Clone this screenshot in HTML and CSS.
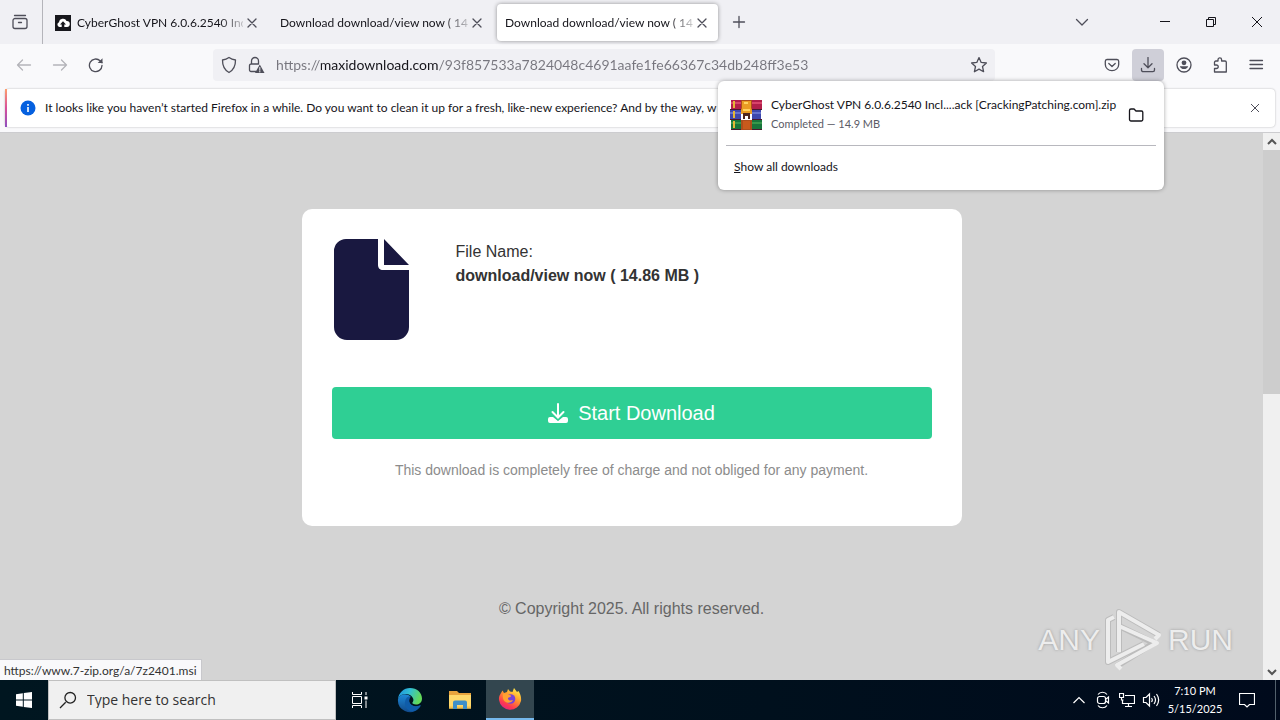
FILE: index.html
```html
<!DOCTYPE html>
<html lang="en">
<head>
<meta charset="utf-8">
<title>Download download/view now ( 14.86 MB )</title>
<link rel="stylesheet" href="styles.css">
</head>
<body>
<header class="tabstrip">
  <button class="recent" aria-label="Recent browsing"><svg width="20" height="20" viewBox="0 0 20 20" class="line"><path d="M4.500 3.500h11M5 6.500h10a2 2 0 0 1 2 2v6a2 2 0 0 1-2 2H5a2 2 0 0 1-2-2v-6a2 2 0 0 1 2-2zM8.500 10.500h3"/></svg></button>
  <div class="tabs">
    <div class="tab">
      <svg class="favicon" width="16" height="16" viewBox="0 0 16 16"><path fill="#17171c" d="M0 0h16v16H0z"/><path fill="#fff" d="M4.500 12A2.500 2.500 0 0 1 4 7.200 4 4 0 0 1 11.600 6 3 3 0 0 1 12 12H9.300V9.500H11L8 6.200 5 9.500h1.700V12z"/></svg>
      <span class="tab-title">CyberGhost VPN 6.0.6.2540 Incl</span>
      <button class="tab-close" aria-label="Close tab"><svg width="10" height="10" viewBox="0 0 10 10" class="line"><path d="M1 1l8 8M9 1L1 9"/></svg></button>
    </div>
    <div class="tab">
      <span class="tab-title">Download download/view now ( 14</span>
      <button class="tab-close" aria-label="Close tab"><svg width="10" height="10" viewBox="0 0 10 10" class="line"><path d="M1 1l8 8M9 1L1 9"/></svg></button>
    </div>
    <div class="tab active">
      <span class="tab-title">Download download/view now ( 14</span>
      <button class="tab-close" aria-label="Close tab"><svg width="10" height="10" viewBox="0 0 10 10" class="line"><path d="M1 1l8 8M9 1L1 9"/></svg></button>
    </div>
  </div>
  <button class="tool" aria-label="New tab"><svg width="16" height="16" viewBox="0 0 16 16" class="line"><path d="M8 2.500v11M2.500 8h11"/></svg></button>
  <button class="tool list-tabs" aria-label="List all tabs"><svg width="16" height="16" viewBox="0 0 16 16" class="line"><path d="M2.500 5.500L8 11l5.500-5.500"/></svg></button>
  <div class="window-buttons">
    <button aria-label="Minimize"><svg width="12" height="12" viewBox="0 0 12 12"><path d="M1 5.500h10"/></svg></button>
    <button aria-label="Restore"><svg width="12" height="12" viewBox="0 0 12 12"><path d="M1.500 3.500h7v7h-7zM3.500 3.500v-2h7v7h-2"/></svg></button>
    <button aria-label="Close"><svg width="12" height="12" viewBox="0 0 12 12"><path d="M1 1l10 10M11 1L1 11"/></svg></button>
  </div>
</header>

<nav class="navbar">
  <button class="tool disabled" aria-label="Back" disabled><svg width="16" height="16" viewBox="0 0 16 16" class="line"><path d="M14.500 8H1.500M6.500 3L1.500 8l5 5"/></svg></button>
  <button class="tool disabled" aria-label="Forward" disabled><svg width="16" height="16" viewBox="0 0 16 16" class="line"><path d="M1.500 8h13M9.500 3l5 5-5 5"/></svg></button>
  <button class="tool" aria-label="Reload"><svg width="16" height="16" viewBox="0 0 16 16" class="line"><path d="M14 8.500a6.300 6.300 0 1 1-1.900-4.700L14 5.700"/><path d="M14.500 1.200v4.800H9.700z" fill="#4e4e59" stroke="none"/></svg></button>
  <div class="urlbar">
    <svg width="16" height="18" viewBox="0 0 16 18" class="line"><path d="M8 1.500c2 1.500 4 2.200 6.500 2.500C14.600 10 12.500 14 8 16.500 3.500 14 1.400 10 1.500 4 4 3.700 6 3 8 1.500z"/></svg>
    <svg width="17" height="18" viewBox="0 0 17 18" class="line"><path d="M8 15.500H3a1.500 1.500 0 0 1-1.500-1.500V9.500A1.500 1.500 0 0 1 3 8h7.500M3.500 8V5a3.500 3.500 0 0 1 7 0v3"/><path d="M11.800 8.500L16.500 17H7z" fill="#4e4e59" stroke="none"/><path d="M11.800 11.500v2.500M11.800 15v1" stroke="#f0f0f4" stroke-width="1"/></svg>
    <input class="url" type="text" aria-label="Address" value="https://maxidownload.com/93f857533a7824048c4691aafe1fe66367c34db248ff3e53">
    <button class="star" aria-label="Bookmark this page"><svg width="18" height="18" viewBox="0 0 18 18" class="line"><path d="M9 1.600l2.200 4.800 5.200.6-3.900 3.500 1.100 5.200L9 13.100l-4.600 2.600 1.100-5.200L1.600 7l5.200-.6z"/></svg></button>
  </div>
  <div class="nav-tools">
    <button class="tool" aria-label="Save to Pocket"><svg width="16" height="16" viewBox="0 0 16 16" class="line"><path d="M3 2.500h10a1.800 1.800 0 0 1 1.700 1.800V7.500a6.700 6.200 0 0 1-13.400 0V4.300A1.800 1.800 0 0 1 3 2.500zM4.800 6.500L8 9.500l3.200-3"/></svg></button>
    <div class="downloads">
      <button class="tool pressed" aria-label="Downloads"><svg width="16" height="16" viewBox="0 0 16 16" class="line"><path d="M8 .500v10M4 6.800l4 4 4-4M1.500 11.500v1.500a1.700 1.700 0 0 0 1.700 1.700h9.600a1.700 1.700 0 0 0 1.700-1.700v-1.500"/></svg></button>
      <section class="panel" aria-label="Downloads">
        <div class="item">
          <svg width="32" height="32" viewBox="0 0 32 32"><path fill="#b21f4b" d="M1 1h31v10H1z"/><path fill="#d8446a" d="M1 3h31v2H1z"/><path fill="#3e48ad" d="M0 11h31v10H0z"/><path fill="#6672cc" d="M0 13h31v2H0z"/><path fill="#18753b" d="M1 21h31v10H1z"/><path fill="#37984a" d="M1 23h31v2H1z"/><path fill="#4a1830" d="M0 10h32v1H0zM0 20h32v1H0zM1 30h31v1H1z"/><path fill="#e5b735" d="M3 2h2v7H3zM3 12h2v7H3zM3 22h2v7H3z"/><path fill="#ad4e1d" d="M11 1h11v30H11z"/><path fill="#ea9c23" d="M12 2h9v7l1 2v5H11v-5l1-2z"/><path fill="#ffd25f" d="M14 3h4v2h-4zM13 10h7v2h-7z"/><path fill="#fff" d="M11 15h11v6H11z"/><path fill="#4e251c" d="M13 14h7v6h-2v-3h-3v3h-2z"/><path fill="#c85a1c" d="M13 22h7v8h-7z"/></svg>
          <div class="item-text"><span class="file">CyberGhost VPN 6.0.6.2540 Incl....ack [CrackingPatching.com].zip</span><span class="state">Completed — 14.9 MB</span></div>
          <button class="folder" aria-label="Show in folder"><svg width="16" height="16" viewBox="0 0 16 16"><path d="M1.500 3.500a1.500 1.500 0 0 1 1.500-1.500h3l2 2h5.500A1.300 1.300 0 0 1 14.800 5.300v7.200A1.500 1.500 0 0 1 13.300 14H3a1.500 1.500 0 0 1-1.500-1.500z" fill="none" stroke="#15141a" stroke-width="1.300"/></svg></button>
        </div>
        <button class="show-all"><u>S</u>how all downloads</button>
      </section>
    </div>
    <button class="tool" aria-label="Account"><svg width="16" height="16" viewBox="0 0 16 16" class="line"><circle cx="8" cy="8" r="7"/><circle cx="8" cy="5.800" r="2.400" fill="#4e4e59" stroke="none"/><path d="M3.800 9.300h8.400A4.400 4 0 0 1 3.800 9.300z" fill="#4e4e59" stroke="none"/></svg></button>
    <button class="tool" aria-label="Extensions"><svg width="16" height="16" viewBox="0 0 16 16" class="line"><path d="M6 4V2.700a1.800 1.800 0 0 1 3.600 0V4h3.400a1.300 1.300 0 0 1 1.300 1.300V15H2.500v-3.500h2a1.700 1.700 0 0 0 0-3.500h-2V5.300A1.300 1.300 0 0 1 3.800 4z"/></svg></button>
    <button class="tool" aria-label="Menu"><svg width="16" height="16" viewBox="0 0 16 16" class="line"><path d="M2 3.500h12.500M2 7.500h12.500M2 11.500h12.500"/></svg></button>
  </div>
</nav>

<div class="notice-row">
  <div class="notice">
    <svg width="16" height="16" viewBox="0 0 16 16"><circle cx="8" cy="8" r="7.500" fill="#0560df"/><path d="M7.200 7h1.600v5H7.200zM7.200 4h1.600v1.700H7.200z" fill="#fff"/></svg>
    <span class="notice-text">It looks like you haven’t started Firefox in a while. Do you want to clean it up for a fresh, like-new experience? And by the way, w</span>
    <button class="notice-close" aria-label="Dismiss"><svg width="10" height="10" viewBox="0 0 10 10"><path d="M1 1l8 8M9 1L1 9" stroke="#4e4e59"/></svg></button>
  </div>
</div>

<div class="viewport">
  <main class="page">
    <article class="card">
      <div class="file-info">
        <svg width="77" height="102" viewBox="0 0 77 102"><path fill="#191840" d="M14 1h32v26c0 3 2 5 5 5h26v57a13 13 0 0 1-13 13H15A13 13 0 0 1 2 89V13A12 12 0 0 1 14 1zM52 1l25 26H52z"/></svg>
        <p class="file-name">File Name:<br><strong>download/view now ( 14.86 MB )</strong></p>
      </div>
      <button class="start"><svg width="20" height="20" viewBox="0 0 20 20"><path fill="#fff" d="M2 14h3l5 4 5-4h3a2 2 0 0 1 2 2v2a2 2 0 0 1-2 2H2a2 2 0 0 1-2-2v-2a2 2 0 0 1 2-2z"/><path d="M10 1v13M4.500 9.500L10 15l5.500-5.500" fill="none" stroke="#2fcf94" stroke-width="4"/><path d="M10 1v13M4.500 9L10 14.500 15.500 9" fill="none" stroke="#fff" stroke-width="2" stroke-linecap="round"/></svg>Start Download</button>
      <p class="fine">This download is completely free of charge and not obliged for any payment.</p>
    </article>
    <footer class="copyright">© Copyright 2025. All rights reserved.</footer>
    <div class="watermark"><span>ANY</span><svg width="60" height="64" viewBox="0 0 60 64"><g fill="none" stroke="#bcbcbc" stroke-width="6" stroke-linejoin="round"><path d="M10 9L4 12v42l36-18M15 44V4l40 23M15 18l35 17-37 23"/></g><g fill="none" stroke="#ededed" stroke-width="4" stroke-linejoin="round"><path d="M10 9L4 12v42l36-18M15 44V4l40 23-4 4M15 18l38 17-40 22 4 4"/></g></svg><span>RUN</span></div>
    <div class="status">https://www.7-zip.org/a/7z2401.msi</div>
  </main>
  <div class="scrollbar">
    <button aria-label="Scroll up"><svg width="10" height="8" viewBox="0 0 10 8"><path d="M1 6l4-4 4 4" /></svg></button>
    <div class="track"><div class="thumb"></div></div>
    <button aria-label="Scroll down"><svg width="10" height="8" viewBox="0 0 10 8"><path d="M1 2l4 4 4-4" /></svg></button>
  </div>
</div>

<footer class="taskbar">
  <button class="task start-menu" aria-label="Start"><svg width="16" height="16" viewBox="0 0 16 16"><path fill="#fff" d="M0 2.200L6.800 1.200V7.500H0zM7.800 1L16 0v7.500H7.800zM0 8.500h6.800v6.300L0 13.800zM7.800 8.500H16V16l-8.200-1z"/></svg></button>
  <label class="search"><svg width="18" height="18" viewBox="0 0 18 18"><path d="M6.700 11.300L1 17M16.500 6.800a5.300 5.300 0 1 1-10.600 0 5.300 5.300 0 0 1 10.600 0z" fill="none" stroke="#222" stroke-width="1.300"/></svg><input type="search" aria-label="Search" placeholder="Type here to search"></label>
  <div class="apps">
    <button class="task" aria-label="Task view"><svg width="18" height="16" viewBox="0 0 18 16"><path d="M1.500 0v2.500h9V0M1.500 4.500h9v7h-9zM1.500 16v-2.500h9V16M15 0v3M15 8.500V16" fill="none" stroke="#fff"/><path fill="#fff" d="M13.500 4.500h3v3h-3z"/></svg></button>
    <button class="task" aria-label="Microsoft Edge"><svg width="26" height="26" viewBox="0 0 26 26"><defs><linearGradient id="e1" x2="1" y2=".3"><stop offset="0" stop-color="#1b8de0"/><stop offset=".5" stop-color="#32bfd4"/><stop offset="1" stop-color="#63d95a"/></linearGradient><linearGradient id="e2" x2="0" y2="1"><stop offset="0" stop-color="#1d89d8"/><stop offset="1" stop-color="#114a8b"/></linearGradient></defs><path fill="url(#e2)" d="M1 12a12 12 0 0 0 20.500 9.500c2-1.700 2.500-3 2-3.300-1 .1-6 2.800-10-1.200-2.500-2.500-2-6 0-7.500C10 6 3 6 1 12z"/><path fill="#0f5ca9" d="M9.500 11c-4 6 0 13.500 6 13.500 3.500-.5 6.500-2.800 8-6.300-4 2.300-8.500 1.300-10.300-1.500-1.700-2.700-.7-5.700.8-7-2-.7-3.500 0-4.500 1.300z"/><path fill="url(#e1)" d="M1 12A12 12 0 0 1 13 1c7 0 12 4.800 12 10.500 0 4-3 6-6 6-2.500 0-4-1-3.700-1.700.4-.8 1.500-1.800 1-3.800C15.500 8.500 11 6.500 7.500 7 4.500 7.300 2 9 1 12z"/></svg></button>
    <button class="task" aria-label="File Explorer"><svg width="22" height="20" viewBox="0 0 22 20"><path fill="#e8a33d" d="M0 1h8l2 2h12v5H0z"/><path fill="#ffd86b" d="M0 5h22v13.500H0z"/><path fill="#f5c04c" d="M0 16.500h22v2H0z"/><path fill="#3f8fc8" d="M4 19v-6.500A2 2 0 0 1 6 10.500h10a2 2 0 0 1 2 2V19h-4v-4H8v4z"/></svg></button>
    <button class="task current" aria-label="Firefox"><svg width="24" height="24" viewBox="0 0 24 24"><defs><linearGradient id="f" x1=".8" x2=".2" y2="1"><stop offset="0" stop-color="#fff04a"/><stop offset=".4" stop-color="#ff9a2d"/><stop offset=".75" stop-color="#ff3a4f"/><stop offset="1" stop-color="#e0208a"/></linearGradient></defs><path fill="url(#f)" d="M3 6L4.500 3.500 6 6l3-1 1-3 2 2.500L14.500 5 16 1l3 4 1.500-1c2 3 3 6.500 2.500 10A11.200 11.200 0 0 1 1 13c-.3-3 .5-4.500 2-7z"/><circle cx="12.500" cy="12" r="4.800" fill="#7642d8"/><path fill="#ffa231" d="M5 7c3-1 4 0 5.500.8 1 .5 2.500.4 2.700 1.200-.5 1.200-3 1.200-3.300 2.500.3 2 3 2.500 5 1.500-1 3-6 4-8.500 1C4.800 12 4.500 9 5 7z"/></svg></button>
  </div>
  <div class="tray">
    <button aria-label="Show hidden icons"><svg width="12" height="12" viewBox="0 0 12 12"><path d="M.500 9L6 3.500 11.500 9"/></svg></button>
    <button aria-label="Meet now"><svg width="14" height="18" viewBox="0 0 14 18"><path d="M2 3.500C4 .500 9 .500 11 3.500M2 14.500c2 3 7 3 9 0M3.500 5.500h4a2 2 0 0 1 2 2v3a2 2 0 0 1-2 2h-4a2 2 0 0 1-2-2v-3a2 2 0 0 1 2-2zM9.500 8.500l3-2.500v6l-3-2.500"/></svg></button>
    <button aria-label="Network"><svg width="16" height="16" viewBox="0 0 16 16"><path d="M6 3.500h9.500v8H3.500V8M9.500 11.500v3M6 14.500h7M.500 1.500h4v4h-4zM2.500 5.500v2.500h2"/></svg></button>
    <button aria-label="Volume"><svg width="18" height="16" viewBox="0 0 18 16"><path d="M1.500 5.500h2.500l3.500-3.500v12L4 10.500H1.500zM9.500 6q1.600 2 0 4M12 4q3 4 0 8M14.500 2q4.300 6 0 12"/></svg></button>
    <div class="clock"><span>7:10 PM</span><span>5/15/2025</span></div>
    <button class="action" aria-label="Notifications"><svg width="16" height="16" viewBox="0 0 16 16"><path d="M.500 1.500h15v11h-5L8 15l-2.500-2.500h-5z"/></svg></button>
    <div class="peek"></div>
  </div>
</footer>
</body>
</html>
```

FILE: styles.css
```css
* { box-sizing: border-box; }
body {
  margin: 0;
  height: 100vh;
  display: flex;
  flex-direction: column;
  overflow: hidden;
  font: 12px/16px Lato, "Open Sans", sans-serif;
  color: #15141a;
  background: #f9f9fb;
}
button {
  border: 0;
  padding: 0;
  background: none;
  font: inherit;
  color: inherit;
  display: flex;
  align-items: center;
  justify-content: center;
}
svg { display: block; flex: none; }
input { min-width: 0; border: 0; padding: 0; outline: 0; background: none; font: inherit; }
p { margin: 0; }
.line { fill: none; stroke: #4e4e59; stroke-width: 1.3; stroke-linecap: round; stroke-linejoin: round; }

.tabstrip { display: flex; height: 44px; flex: none; background: #f0f0f4; }
.recent { width: 43px; padding-right: 2px; border-right: 1px solid #b4b4ba; }
.tabs { display: flex; padding: 4px 0 3px 4px; gap: 4px; }
.tab { display: flex; align-items: center; width: 221px; padding: 0 11px 0 8px; border-radius: 4px; }
.tab.active { background: #fff; box-shadow: 0 0 4px rgba(0, 0, 0, .4); }
.favicon { margin-right: 6px; }
.tab-title {
  flex: 1;
  overflow: hidden;
  white-space: nowrap;
  -webkit-mask-image: linear-gradient(to left, rgba(0, 0, 0, .2), #000 24px);
  mask-image: linear-gradient(to left, rgba(0, 0, 0, .2), #000 24px);
}
.tab-close { width: 10px; margin-left: 4px; }
.tool { width: 32px; height: 32px; border-radius: 4px; flex: none; }
.tabstrip .tool { align-self: center; margin-left: 5px; }
.tabstrip .list-tabs { margin: 0 44px 0 auto; }
.window-buttons { display: flex; }
.window-buttons button { width: 46px; }
.window-buttons path { fill: none; stroke: #15141a; }

.navbar { display: flex; align-items: center; gap: 4px; flex: none; height: 41px; padding: 0 8px; }
.disabled { opacity: .4; }
.pressed { background: #cfcfd8; }
.urlbar { flex: 1; display: flex; align-items: center; gap: 11px; height: 32px; margin: 0 97px; padding: 0 7px 0 8px; border-radius: 4px; background: #f0f0f4; }
.url {
  flex: 1;
  font-size: 14px;
  height: 24px;
  color: transparent;
  background: linear-gradient(90deg, #77767e 45px, #15141a 45px, #15141a 162px, #77767e 162px);
  -webkit-background-clip: text;
  background-clip: text;
}
.nav-tools { display: flex; gap: 4px; }
.downloads { position: relative; }
.panel {
  position: absolute;
  z-index: 5;
  top: 32px;
  right: 0;
  width: 446px;
  padding: 8px;
  border-radius: 6px;
  background: #fff;
  box-shadow: 0 0 4px rgba(0, 0, 0, .35);
}
.item { display: flex; align-items: center; gap: 9px; height: 57px; padding: 0 12px 4px 4px; border-bottom: 1px solid #b8b8be; }
.item-text { flex: 1; min-width: 0; display: flex; flex-direction: column; gap: 3px; white-space: nowrap; }
.state { font-size: 11px; color: #5b5b66; }
.show-all { width: 100%; height: 36px; padding: 6px 8px 0; justify-content: flex-start; }

.notice-row { flex: none; padding: 4px 5px 5px; border-bottom: 1px solid #cccccf; }
.notice {
  display: flex;
  align-items: center;
  gap: 9px;
  height: 38px;
  padding: 0 15px 0 13px;
  border-radius: 4px;
  border-left: 2px solid;
  border-image: linear-gradient(#ffa36b, #d84f9a, #8a4fc0) 1;
  background: #fff;
  box-shadow: 0 0 2px rgba(0, 0, 0, .3);
}
.notice-text { flex: 1; overflow: hidden; white-space: nowrap; }

.viewport { flex: 1; display: flex; min-height: 0; }
.page { position: relative; flex: 1; background: #d4d4d4; font-family: "Liberation Sans", Arial, sans-serif; overflow: hidden; }
.card { width: 660px; max-width: 100%; margin: 76px auto 0; padding: 29px 30px 46px; border-radius: 10px; background: #fff; }
.file-info { display: flex; gap: 47px; }
.file-name { padding-top: 2px; font-size: 16px; line-height: 24px; color: #333; }
.start { width: 100%; height: 52px; margin-top: 47px; gap: 10px; border-radius: 4px; background: #2fcf94; color: #fff; font-size: 20px; }
.fine { margin-top: 21px; font-size: 14px; line-height: 20px; text-align: center; color: #8c8c8c; }
.copyright { margin-top: 71px; font-size: 16px; line-height: 24px; text-align: center; color: #666; }
.watermark {
  position: absolute;
  right: 30px;
  bottom: 8px;
  display: flex;
  align-items: center;
  gap: 4px;
  font: 30px/64px "Liberation Sans", Arial, sans-serif;
  color: #ededed;
  text-shadow: 0 0 3px #999;
}
.status { position: absolute; left: 0; bottom: 0; padding: 3px 4px 1px; background: #f9f9fb; border: 1px solid #c8c8cc; border-width: 1px 1px 0 0; font: 12px/16px Lato, "Open Sans", sans-serif; color: #333; }
.scrollbar { flex: none; width: 17px; display: flex; flex-direction: column; background: #f0f0f0; }
.scrollbar button { height: 17px; }
.scrollbar path { fill: none; stroke: #555; stroke-width: 2; }
.track { flex: 1; }
.thumb { height: 47.500%; background: #cdcdcd; }

.taskbar { flex: none; display: flex; height: 40px; background: linear-gradient(90deg, #001620, #00101d 60%, #000a1c); color: #fff; font-family: "Open Sans", "Noto Sans", sans-serif; }
.task { width: 48px; height: 40px; }
.search { display: flex; align-items: center; gap: 10px; width: 288px; padding: 0 10px 0 10px; border: 1px solid #c0c0c0; background: #f0f0f0; }
.search input { flex: 1; font-size: 14px; appearance: none; }
.search input::placeholder { color: #333; opacity: 1; }
.apps { display: flex; gap: 2px; }
.current { background: #33464f; border-bottom: 2px solid #76b9ed; }
.tray { display: flex; margin-left: auto; }
.tray button { width: 24px; }
.tray path { fill: none; stroke: #fff; stroke-width: 1.2; }
.clock { display: flex; flex-direction: column; justify-content: center; width: 64px; text-align: center; font-size: 11px; line-height: 18px; font-family: Lato, "Open Sans", sans-serif; }
.tray .action { width: 40px; }
.peek { width: 5px; margin-left: 8px; border-left: 1px solid #52606c; }
```
